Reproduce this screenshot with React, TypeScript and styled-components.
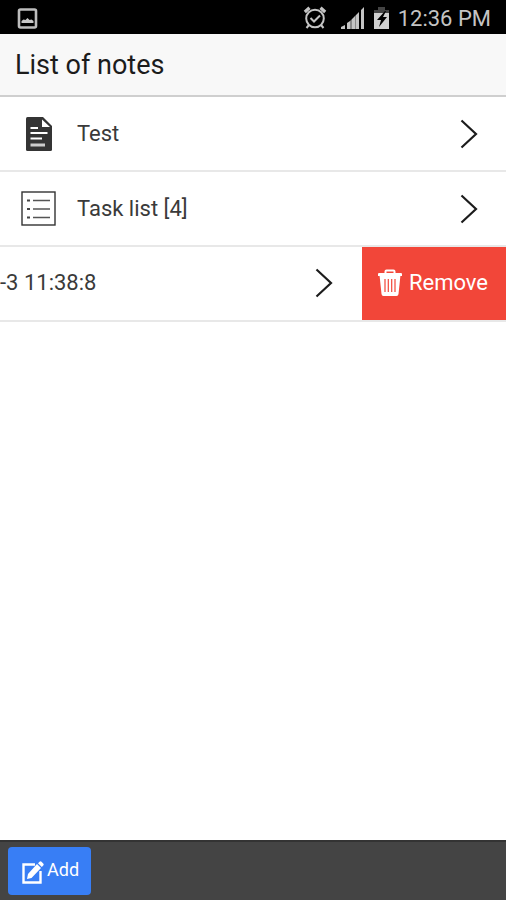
import React from "react";
import styled, { createGlobalStyle } from "styled-components";

const GlobalStyle = createGlobalStyle`
  *, *::before, *::after { box-sizing: border-box; }
  body { margin: 0; background: #fff; }
  button { font: inherit; }
`;

const Screen = styled.div`
  display: flex;
  flex-direction: column;
  min-height: 100vh;
  background: #fff;
  color: #3a3a3a;
  font: 400 22px/28px Roboto, "Liberation Sans", sans-serif;
`;

const StatusBar = styled.div`
  display: flex;
  align-items: center;
  height: 34px;
  padding: 2px 15px 0 17px;
  background: #000;
  color: #c4c4c4;
  svg { display: block; flex: none; }
`;

const StatusIcons = styled.div`
  display: flex;
  align-items: center;
  margin-left: auto;
  gap: 8px;
`;

const Indicator = styled.span`
  margin-right: 6px;
`;

const Clock = styled.time`
  font-size: 22px;
  line-height: 32px;
  padding-top: 2px;
  white-space: nowrap;
`;

const Header = styled.header`
  display: flex;
  align-items: center;
  height: 63px;
  padding: 0 15px;
  border-bottom: 2px solid #cfcfcf;
  background: #f8f8f8;
`;

const Title = styled.h1`
  margin: 0;
  color: #1c1c1c;
  font-size: 27px;
  font-weight: 400;
  line-height: 32px;
`;

const Main = styled.main`
  flex: 1;
`;

const List = styled.ul`
  margin: 0;
  padding: 0;
  list-style: none;
`;

const Item = styled.li`
  display: flex;
  height: 75px;
  border-bottom: 2px solid #e8e8e8;
`;

const NoteButton = styled.button<{ $swiped?: boolean }>`
  display: flex;
  flex: 1;
  align-items: center;
  min-width: 0;
  padding: ${(p) => (p.$swiped ? "0 29px 2px 0" : "0 28px 0 21px")};
  border: 0;
  background: #fff;
  color: inherit;
  text-align: left;
  cursor: pointer;
  svg { display: block; flex: none; }
`;

const Leading = styled.span`
  display: flex;
  justify-content: center;
  width: 35px;
  margin-right: 21px;
`;

const Label = styled.span`
  flex: 1;
  white-space: nowrap;
`;

const RemoveButton = styled.button`
  display: flex;
  align-items: center;
  gap: 6px;
  padding: 0 17px 2px 16px;
  border: 0;
  background: #f24639;
  color: #fff;
  cursor: pointer;
  svg { display: block; flex: none; }
  span { min-width: 81px; }
`;

const Footer = styled.footer`
  display: flex;
  height: 60px;
  padding: 5px 8px;
  border-top: 2px solid #333;
  background: #444;
`;

const AddButton = styled.button`
  display: flex;
  align-items: center;
  height: 48px;
  gap: 3px;
  padding: 0 12px 0 14px;
  border: 0;
  border-radius: 4px;
  background: #387ef5;
  color: #fff;
  font-size: 18px;
  line-height: 24px;
  cursor: pointer;
  svg { display: block; flex: none; align-self: flex-end; margin-bottom: 11px; }
  span { padding-bottom: 3px; }
`;

const ImageIcon = () => (
  <svg width="21" height="21" viewBox="0 0 21 21" aria-hidden="true">
    <rect x="2" y="1.500" width="17" height="18" rx="1.500" fill="none" stroke="#bdbdbd" strokeWidth="2.600" />
    <path d="M4.500 15v-2l2-1.500 2 .5 2-2 2 2 2-.5 2 1.500v2z" fill="#c8c8c8" />
  </svg>
);

const AlarmIcon = () => (
  <svg width="24" height="24" viewBox="0 0 24 24" fill="none" stroke="#c4c4c4" aria-hidden="true">
    <circle cx="12" cy="12.500" r="8.800" strokeWidth="2" />
    <path d="M1.800 6 6.500 1.700M22.200 6 17.500 1.700" strokeWidth="3.200" />
    <path d="m7.500 12 3.500 3.500 6-6M6 19l-2.500 3M18 19l2.500 3" strokeWidth="2" />
  </svg>
);

const SignalIcon = () => (
  <svg width="24" height="24" viewBox="0 0 24 24" aria-hidden="true">
    <path fill="#c4c4c4" d="M0 23v-2l4-2v4zM6 17l3-2v8H6zM11 13l3-3v13h-3zM15 9l3-3v17h-3zM20 4l3-3v22h-3z" />
    <path fill="#888" d="M9 15l2-2v10H9zM14 10l1-1v14h-1z" />
  </svg>
);

const BatteryIcon = () => (
  <svg width="17" height="24" viewBox="0 0 17 24" aria-hidden="true">
    <path fill="#444" d="M5 1h7v3h4v4H1V4h4z" />
    <path fill="#d0d0d0" d="M1 7h15v16H1z" />
    <path fill="#000" d="M12 5 4 14h4l-2 7 8-10h-4l3-6z" />
  </svg>
);

const DocumentIcon = () => (
  <svg width="26" height="34" viewBox="0 0 26 34" aria-hidden="true">
    <path fill="#343434" d="M1.500 0H17l9 9v23.500q0 1.500-1.500 1.500h-23Q0 34 0 32.500v-31Q0 0 1.500 0z" />
    <path fill="#fff" d="M16 2.500v7.500h8z" />
    <path stroke="#fff" strokeWidth="1.800" d="M4.500 11H12M4.500 16H21.500M4.500 21.500H16" />
    <path stroke="#ccc" strokeWidth="3" d="M4.500 28H19" />
  </svg>
);

const TaskListIcon = () => (
  <svg width="35" height="35" viewBox="0 0 35 35" fill="none" aria-hidden="true">
    <rect x="1" y="1" width="33" height="33" stroke="#333" strokeWidth="1.400" />
    <path stroke="#555" strokeWidth="1.300" d="M12 9.500h17M12 18h17M12 26.500h17" />
    <path stroke="#444" strokeWidth="2.200" d="M6 9.500h3M6 18h3M6 26.500h3" />
  </svg>
);

const ChevronIcon = () => (
  <svg width="18" height="30" viewBox="0 0 18 30" fill="none" aria-hidden="true">
    <path d="M1.500 1.500 16 15 1.500 28.500" stroke="#1c1c1c" strokeWidth="2.200" />
  </svg>
);

const TrashIcon = () => (
  <svg width="24" height="27" viewBox="0 0 24 27" aria-hidden="true">
    <path d="M7.500 5V2.500q0-1 1-1h7q1 0 1 1V5" fill="none" stroke="#fff" strokeWidth="2" />
    <path fill="#fff" d="M1 4h22q1 0 1 1.200V7H0V5.200Q0 4 1 4zM1.500 6h21l-2 19q-.2 2-2 2h-13q-1.800 0-2-2z" />
    <path stroke="#f24639" strokeWidth="1.200" d="M7 10v13M10.300 10v13M13.700 10v13M17 10v13" />
  </svg>
);

const ComposeIcon = () => (
  <svg width="22" height="23" viewBox="0 0 22 23" aria-hidden="true">
    <path d="M13 3.500H1.500V21.500H18.500V10" fill="none" stroke="#fff" strokeWidth="2.400" />
    <path fill="#fff" d="m15 3 4 4L9.500 17 5 18l1-5zM16 2.200 17.500.8q1-1 2 0l1.700 1.700q1 1 0 2L19.800 6z" />
  </svg>
);

const notes = [
  { label: "Test", icon: <DocumentIcon /> },
  { label: "Task list [4]", icon: <TaskListIcon /> },
  { label: "-3 11:38:8", swiped: true },
];

export default function App() {
  return (
    <>
      <GlobalStyle />
      <Screen>
        <StatusBar>
          <ImageIcon />
          <StatusIcons>
            <Indicator>
              <AlarmIcon />
            </Indicator>
            <SignalIcon />
            <BatteryIcon />
            <Clock>12:36 PM</Clock>
          </StatusIcons>
        </StatusBar>
        <Header>
          <Title>List of notes</Title>
        </Header>
        <Main>
          <List>
            {notes.map((note) => (
              <Item key={note.label}>
                <NoteButton type="button" $swiped={note.swiped}>
                  {note.icon && <Leading>{note.icon}</Leading>}
                  <Label>{note.label}</Label>
                  <ChevronIcon />
                </NoteButton>
                {note.swiped && (
                  <RemoveButton type="button">
                    <TrashIcon />
                    <span>Remove</span>
                  </RemoveButton>
                )}
              </Item>
            ))}
          </List>
        </Main>
        <Footer>
          <AddButton type="button">
            <ComposeIcon />
            <span>Add</span>
          </AddButton>
        </Footer>
      </Screen>
    </>
  );
}
